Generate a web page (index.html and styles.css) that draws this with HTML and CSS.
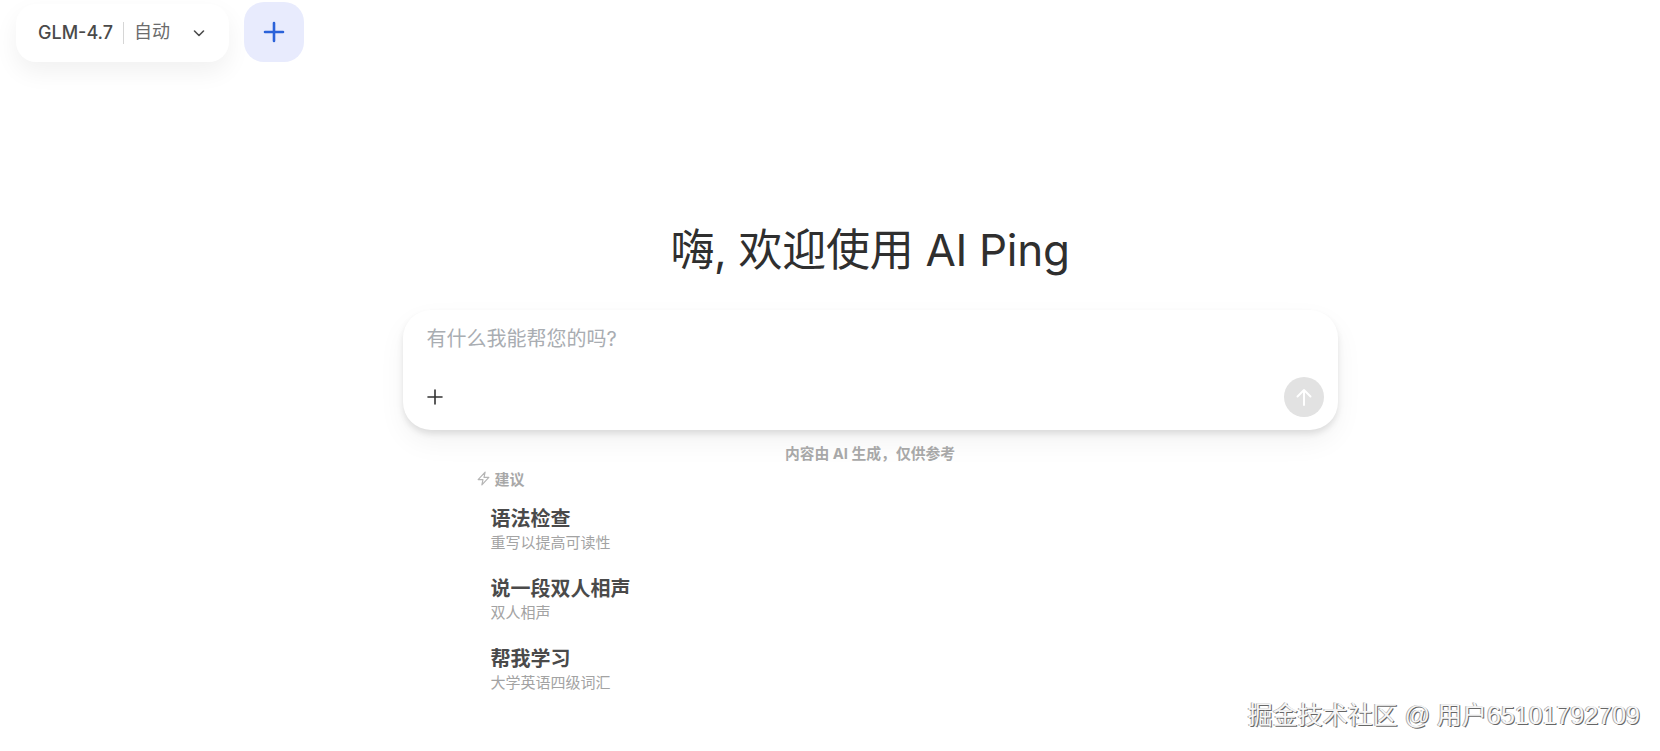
FILE: index.html
```html
<!DOCTYPE html>
<html lang="zh-CN">

<head>
    <meta charset="UTF-8">
    <meta name="viewport" content="width=device-width, initial-scale=1.0">
    <title>AI Ping</title>
    <link rel="stylesheet" href="styles.css">
</head>

<body>
    <!-- top bar -->
    <div class="topbar">
        <div class="model_pill">
            <span class="model_name">GLM-4.7</span>
            <span class="model_line"></span>
            <span class="model_mode">自动</span>
            <svg class="model_arrow" width="14" height="14" viewBox="0 0 14 14" fill="none" stroke="#4b4b4b" stroke-width="1.6" stroke-linecap="round" stroke-linejoin="round">
                <path d="M2.5 5l4.5 4.5L11.5 5" />
            </svg>
        </div>
        <div class="add_btn">
            <svg width="22" height="22" viewBox="0 0 22 22" fill="none" stroke="#2b62d9" stroke-width="2.6" stroke-linecap="round">
                <path d="M11 2v18M2 11h18" />
            </svg>
        </div>
    </div>

    <!-- chat -->
    <div class="main">
        <h1 class="hello">嗨, 欢迎使用 AI Ping</h1>
        <div class="chat_card">
            <div class="placeholder">有什么我能帮您的吗?</div>
            <div class="chat_tools">
                <svg width="16" height="16" viewBox="0 0 16 16" fill="none" stroke="#333" stroke-width="1.6" stroke-linecap="round">
                    <path d="M8 1v14M1 8h14" />
                </svg>
                <div class="send_btn">
                    <svg width="20" height="20" viewBox="0 0 20 20" fill="none" stroke="#fff" stroke-width="2" stroke-linecap="round" stroke-linejoin="round">
                        <path d="M10 18V3M3.5 9.5L10 3l6.5 6.5" />
                    </svg>
                </div>
            </div>
        </div>
        <div class="notice">内容由 AI 生成，仅供参考</div>

        <div class="suggest">
            <div class="suggest_head">
                <svg width="15" height="15" viewBox="0 0 14 14" fill="none" stroke="#b5b5b5" stroke-width="1.1" stroke-linejoin="round">
                    <path d="M8.5 1L2 8h4.5l-1 5L12 6H7.5z" />
                </svg>
                <span>建议</span>
            </div>
            <div class="suggest_item">
                <div class="suggest_title">语法检查</div>
                <div class="suggest_sub">重写以提高可读性</div>
            </div>
            <div class="suggest_item">
                <div class="suggest_title">说一段双人相声</div>
                <div class="suggest_sub">双人相声</div>
            </div>
            <div class="suggest_item">
                <div class="suggest_title">帮我学习</div>
                <div class="suggest_sub">大学英语四级词汇</div>
            </div>
        </div>
    </div>

    <div class="watermark">掘金技术社区 @ 用户65101792709</div>
</body>

</html>
```

FILE: styles.css
```css
* {
    box-sizing: border-box;
}

html,
body {
    margin: 0;
    height: 751px;
    overflow: hidden;
}

body {
    background: #fff;
    color: #333;
    font-family: Inter, "Noto Sans CJK SC", sans-serif;
}

.topbar {
    display: flex;
    align-items: flex-end;
    gap: 15px;
    height: 62px;
    padding-left: 16px;
}

.model_pill {
    display: flex;
    align-items: center;
    width: 213px;
    height: 58px;
    padding-left: 22px;
    background: #fff;
    border-radius: 20px;
    box-shadow: 0 10px 24px rgba(0, 0, 0, 0.06);
}

.model_name {
    font-size: 18px;
    line-height: 24px;
    font-weight: 500;
    color: #4a4a4a;
}

.model_line {
    width: 1px;
    height: 22px;
    margin: 0 10px;
    background: #d6d6d6;
}

.model_mode {
    height: 24px;
    font-size: 18px;
    line-height: 22px;
    color: #6b6b6b;
}

.model_arrow {
    margin-left: 22px;
}

.add_btn {
    display: flex;
    align-items: center;
    justify-content: center;
    width: 60px;
    height: 60px;
    background: #e8ebfd;
    border-radius: 20px;
}

.main {
    display: flex;
    flex-direction: column;
    align-items: center;
    padding-left: 80px;
}

.hello {
    margin: 156px 0 0;
    height: 63px;
    line-height: 64px;
    font-size: 44px;
    font-weight: 400;
    letter-spacing: -0.3px;
    color: #2f2f2f;
}

.chat_card {
    width: 935px;
    height: 120px;
    margin-top: 29px;
    padding: 14px 14px 13px 24px;
    display: flex;
    flex-direction: column;
    justify-content: space-between;
    background: #fff;
    border-radius: 28px;
    box-shadow: 0 4px 6px rgba(0, 0, 0, 0.1), 0 12px 28px rgba(0, 0, 0, 0.05);
}

.placeholder {
    font-size: 20px;
    line-height: 30px;
    color: #a9adb2;
}

.chat_tools {
    display: flex;
    align-items: center;
    justify-content: space-between;
}

.send_btn {
    display: flex;
    align-items: center;
    justify-content: center;
    width: 40px;
    height: 40px;
    background: #e2e2e2;
    border-radius: 50%;
}

.notice {
    margin-top: 14px;
    font-size: 14.8px;
    line-height: 20px;
    font-weight: 700;
    color: #a8a8a8;
}

.suggest {
    width: 935px;
    margin-top: 2px;
    padding-left: 73px;
}

.suggest_head {
    display: flex;
    align-items: center;
    gap: 4px;
    height: 24px;
    font-size: 15px;
    font-weight: 700;
    color: #a8a8a8;
}

.suggest_item {
    margin: 0 0 22px 15px;
}

.suggest_head + .suggest_item {
    margin-top: 15px;
}

.suggest_title {
    font-size: 20px;
    line-height: 28px;
    font-weight: 700;
    color: #4a4a4a;
}

.suggest_sub {
    font-size: 15px;
    line-height: 20px;
    color: #a3a3a3;
}

/* over the page, bottom right */
.watermark {
    position: absolute;
    right: 20px;
    top: 698px;
    font-family: "Liberation Sans", "Noto Sans CJK SC", sans-serif;
    font-size: 25px;
    line-height: 34px;
    color: #f6f6f6;
    text-shadow: 1px 1px 0 #666, -1px 0 0 #aaa;
}
```
